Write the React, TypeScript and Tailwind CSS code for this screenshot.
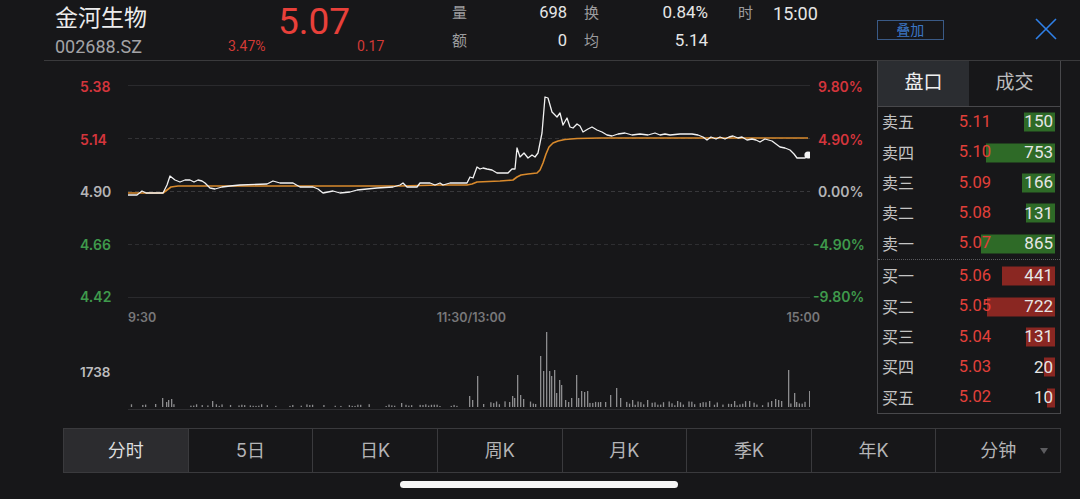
import React from "react";

const WHITE: [number, number][] = [
  [128, 195], [137, 195], [142, 191], [146, 193], [150, 193], [163, 193], [167, 185], [170, 176], [175, 180], [180, 182], [185, 180], [190, 180], [194, 182], [198, 180], [202, 181], [205, 183], [210, 188], [215, 189], [222, 187], [230, 186], [240, 185], [267, 184], [273, 181], [280, 183], [293, 183], [300, 187], [313, 187], [318, 189], [323, 193], [328, 192], [333, 191], [340, 193], [350, 192], [357, 190], [377, 188], [393, 187], [400, 185], [403, 183], [407, 187], [417, 187], [420, 183], [430, 183], [435, 185], [440, 183], [443, 185], [450, 183], [467, 183], [470, 177], [473, 178], [477, 167], [480, 169], [483, 168], [487, 169], [492, 170], [497, 173], [508, 173], [512, 169], [515, 169], [517, 148], [520, 157], [524, 153], [528, 158], [532, 155], [535, 157], [538, 153], [542, 133], [545, 97], [548, 98], [552, 112], [557, 117], [560, 113], [563, 125], [567, 118], [570, 127], [573, 128], [577, 124], [580, 126], [583, 132], [588, 129], [592, 127], [597, 130], [602, 132], [607, 135], [612, 136], [618, 134], [625, 133], [632, 135], [640, 134], [648, 135], [655, 133], [660, 135], [665, 134], [670, 135], [680, 134], [692, 134], [698, 135], [703, 137], [707, 140], [711, 137], [716, 139], [720, 137], [725, 139], [729, 137], [733, 136], [738, 138], [742, 137], [747, 140], [752, 139], [756, 140], [760, 142], [765, 139], [772, 141], [780, 147], [785, 148], [790, 150], [794, 154], [797, 158], [805, 158], [808, 155],
];

const AVG: [number, number][] = [
  [128, 193], [163, 193], [167, 190], [171, 187], [178, 186], [205, 186], [300, 186], [400, 186], [440, 185], [467, 185], [472, 184], [477, 182], [500, 181], [513, 180], [517, 177], [521, 175], [528, 174], [537, 173], [540, 170], [543, 163], [546, 154], [549, 147], [553, 143], [558, 141], [565, 139.5], [577, 138.5], [600, 138], [808, 138],
];

const MAJORS: [number, number][] = [
  [155, 3], [162, 9], [166, 5], [168, 7], [171, 8], [212, 6], [401, 4], [469, 11], [472, 7], [477, 31], [483, 3], [509, 5], [512, 11], [514, 9], [517, 32], [520, 12], [523, 8], [535, 3], [540, 51], [543, 36], [546, 75], [549, 36], [551, 31], [554, 37], [556, 14], [559, 27], [561, 22], [565, 7], [568, 5], [571, 9], [576, 32], [578, 9], [581, 16], [584, 15], [587, 16], [600, 5], [605, 5], [610, 12], [616, 19], [620, 9], [632, 7], [647, 7], [677, 6], [709, 6], [734, 6], [749, 6], [771, 6], [775, 8], [778, 7], [781, 6], [788, 37], [794, 14], [796, 5], [809, 16],
];

function buildBars(): [number, number][] {
  const out: [number, number][] = [...MAJORS];
  let s = 12345;
  const rnd = () => {
    s = (s * 16807) % 2147483647;
    return s / 2147483647;
  };
  for (let i = 0; i < 242; i++) {
    const x = 128 + i * 2.83;
    if (MAJORS.some(([mx]) => Math.abs(mx - x) < 2)) continue;
    const r = rnd();
    if (x < 466) {
      if (r < 0.45) continue;
      out.push([x, 1 + rnd() * 1.8]);
    } else {
      if (r < 0.12) continue;
      out.push([x, 1.5 + rnd() * 4.5]);
    }
  }
  return out;
}

const BARS = buildBars();

const pts = (a: [number, number][]) => a.map(([x, y]) => `${x},${y}`).join(" ");

const SELL = [
  { l: "卖五", p: "5.11", q: "150", w: 31 },
  { l: "卖四", p: "5.10", q: "753", w: 69 },
  { l: "卖三", p: "5.09", q: "166", w: 33 },
  { l: "卖二", p: "5.08", q: "131", w: 29 },
  { l: "卖一", p: "5.07", q: "865", w: 74 },
];
const BUY = [
  { l: "买一", p: "5.06", q: "441", w: 53 },
  { l: "买二", p: "5.05", q: "722", w: 68 },
  { l: "买三", p: "5.04", q: "131", w: 29 },
  { l: "买四", p: "5.03", q: "20", w: 11 },
  { l: "买五", p: "5.02", q: "10", w: 8 },
];

function Row({ l, p, q, w, buy }: { l: string; p: string; q: string; w: number; buy?: boolean }) {
  return (
    <div className="relative flex h-[30.4px] items-center">
      <div
        className={buy ? "absolute right-[5px] top-1/2 h-[19px] -translate-y-1/2 bg-[#8a2722]" : "absolute right-[5px] top-1/2 h-[19px] -translate-y-1/2 bg-[#2e6a27]"}
        style={{ width: w }}
      />
      <span className="relative w-[60px] pl-[4px] text-[16px] text-[#c4c4c4]">{l}</span>
      <span className="relative w-[53px] text-right font-['Roboto',sans-serif] text-[16.5px] text-[#e2403a]">{p}</span>
      <span className="relative flex-1 pr-[7px] text-right font-['Roboto',sans-serif] text-[17px] text-[#e6e6e6]">{q}</span>
    </div>
  );
}

const TABS = ["分时", "5日", "日K", "周K", "月K", "季K", "年K", "分钟"];

export default function App() {
  return (
    <div className="h-[499px] w-[1080px] overflow-hidden bg-[#171719] font-['Inter','Noto_Sans_CJK_SC',sans-serif] text-white">
      {/* header */}
      <div className="ml-[44px] flex h-[61px] border-b border-[#3a3a3c]">
        <div className="flex w-[184px] flex-col pl-[11px]">
          <div className="mt-[4px] text-[23px] leading-[28px] text-[#ececec]">金河生物</div>
          <div className="mt-[5px] font-['Roboto',sans-serif] text-[18px] leading-[20px] text-[#a3a3a6]">002688.SZ</div>
        </div>
        <div className="flex w-[212px] flex-col">
          <div className="pl-[50px] font-['Roboto',sans-serif] text-[37px] leading-[43px] text-[#e8403a]">5.07</div>
          <div className="-mt-[6px] flex font-['Roboto',sans-serif] text-[14px] leading-[18px] text-[#d23a36]">
            <span className="w-[129px]">3.47%</span>
            <span>0.17</span>
          </div>
        </div>
        <div className="flex w-[127px] flex-col pl-[12px] text-[15px]">
          <div className="flex h-[26px] items-center justify-between">
            <span className="text-[#9c9c9e]">量</span>
            <span className="font-['Roboto',sans-serif] text-[16.5px] text-[#e6e6e6]">698</span>
          </div>
          <div className="mt-[2px] flex h-[26px] items-center justify-between">
            <span className="text-[#9c9c9e]">额</span>
            <span className="font-['Roboto',sans-serif] text-[16.5px] text-[#e6e6e6]">0</span>
          </div>
        </div>
        <div className="flex w-[141px] flex-col pl-[17px] text-[15px]">
          <div className="flex h-[26px] items-center justify-between">
            <span className="text-[#9c9c9e]">换</span>
            <span className="font-['Roboto',sans-serif] text-[17px] text-[#e6e6e6]">0.84%</span>
          </div>
          <div className="mt-[2px] flex h-[26px] items-center justify-between">
            <span className="text-[#9c9c9e]">均</span>
            <span className="font-['Roboto',sans-serif] text-[17px] text-[#e6e6e6]">5.14</span>
          </div>
        </div>
        <div className="flex h-[26px] items-center pl-[30px] text-[15px]">
          <span className="text-[#9c9c9e]">时</span>
          <span className="ml-[20px] font-['Roboto',sans-serif] text-[18px] text-[#e6e6e6]">15:00</span>
        </div>
        <div className="ml-[59px] mt-[20px] flex h-[20px] w-[67px] items-center justify-center border border-[#3a5a86] text-[14px] leading-none text-[#3b76c4]">
          叠加
        </div>
        <div className="ml-[91px] mt-[18px]">
          <svg width="22" height="22" viewBox="0 0 22 22">
            <path d="M1 1 L21 21 M21 1 L1 21" stroke="#2f80e8" strokeWidth="1.6" fill="none" />
          </svg>
        </div>
      </div>

      {/* main */}
      <div className="flex h-[353px]">
        <div className="flex w-[877px] flex-col">
          <div className="flex pt-[16px]">
            <div className="flex h-[228px] w-[128px] flex-col justify-between pl-[80px] pt-[2px] text-[14px] font-semibold leading-[16px]">
              <span className="text-[#d4353c]">5.38</span>
              <span className="text-[#d4353c]">5.14</span>
              <span className="text-[#b4b4b6]">4.90</span>
              <span className="text-[#3f9a4c]">4.66</span>
              <span className="text-[#3f9a4c]">4.42</span>
            </div>
            <svg width="682" height="228" viewBox="128 77 682 228">
              <line x1="128" y1="85.5" x2="810" y2="85.5" stroke="#2a2a2d" strokeWidth="1" />
              <line x1="128" y1="138.5" x2="810" y2="138.5" stroke="#333336" strokeWidth="1" strokeDasharray="4 3" />
              <line x1="128" y1="191.5" x2="810" y2="191.5" stroke="#38383b" strokeWidth="1" strokeDasharray="4 3" />
              <line x1="128" y1="244.5" x2="810" y2="244.5" stroke="#2e2e31" strokeWidth="1" strokeDasharray="4 3" />
              <line x1="128" y1="297.5" x2="810" y2="297.5" stroke="#2a2a2d" strokeWidth="1" />
              <polyline points={pts(AVG)} fill="none" stroke="#d98a2c" strokeWidth="1.6" strokeLinejoin="round" />
              <polyline points={pts(WHITE)} fill="none" stroke="#f2f2f2" strokeWidth="1.3" strokeLinejoin="round" />
              <circle cx="808" cy="155" r="3.6" fill="#f4f4f4" />
            </svg>
            <div className="flex h-[228px] flex-col justify-between pl-[8px] pt-[2px] text-[14px] font-semibold leading-[16px]">
              <span className="text-[#d4353c]">9.80%</span>
              <span className="text-[#d4353c]">4.90%</span>
              <span className="text-[#b4b4b6]">0.00%</span>
              <span className="-ml-[5px] text-[#3f9a4c]">-4.90%</span>
              <span className="-ml-[5px] text-[#3f9a4c]">-9.80%</span>
            </div>
          </div>
          <div className="ml-[128px] flex h-[26px] w-[692px] items-center justify-between text-[12.5px] font-semibold text-[#78787a]">
            <span>9:30</span>
            <span>11:30/13:00</span>
            <span>15:00</span>
          </div>
          <div className="flex h-[80px]">
            <div className="w-[128px] pl-[80px] pt-[33px] text-[13.5px] font-semibold leading-[16px] text-[#bdbdbf]">1738</div>
            <svg width="682" height="80" viewBox="128 331 682 80">
              {BARS.map(([x, h], i) => (
                <rect key={i} x={x} y={407 - h} width="1.3" height={h} fill="#8c8c8e" />
              ))}
              <line x1="128" y1="409.5" x2="810" y2="409.5" stroke="#2e2e31" strokeWidth="1" />
            </svg>
          </div>
        </div>

        {/* order book */}
        <div className="flex w-[184px] flex-col border-x border-b border-[#48484b]">
          <div className="flex h-[46px] border-b border-[#48484b] text-[19px]">
            <div className="flex w-[91px] items-center justify-center bg-[#2b2d31] text-[#f0f0f0]">盘口</div>
            <div className="flex flex-1 items-center justify-center text-[#bcbcbe]">成交</div>
          </div>
          <div className="flex flex-col">
            {SELL.map((r) => (
              <Row key={r.l} {...r} />
            ))}
          </div>
          <div className="h-[1px] border-t border-dotted border-[#5a5a5e]" />
          <div className="flex flex-col pt-[1px]">
            {BUY.map((r) => (
              <Row key={r.l} {...r} buy />
            ))}
          </div>
        </div>
      </div>

      {/* bottom tabs */}
      <div className="ml-[63px] mt-[14px] flex h-[45px] w-[998px] border border-[#3a3a3d]">
        {TABS.map((t, i) => (
          <div
            key={t}
            className={
              i === 0
                ? "relative flex flex-1 items-center justify-center bg-[#2c2c2f] text-[18px] text-[#dedede]"
                : "relative flex flex-1 items-center justify-center border-l border-[#3a3a3d] text-[18px] text-[#b4b4b6]"
            }
          >
            {t}
            {i === 7 && (
              <span className="absolute right-[12px] top-1/2 -translate-y-1/2 border-x-[4px] border-t-[6px] border-x-transparent border-t-[#5c5c5f]" />
            )}
          </div>
        ))}
      </div>

      <div className="ml-[400px] mt-[8px] h-[7px] w-[278px] rounded-full bg-[#f5f5f5]" />
    </div>
  );
}
